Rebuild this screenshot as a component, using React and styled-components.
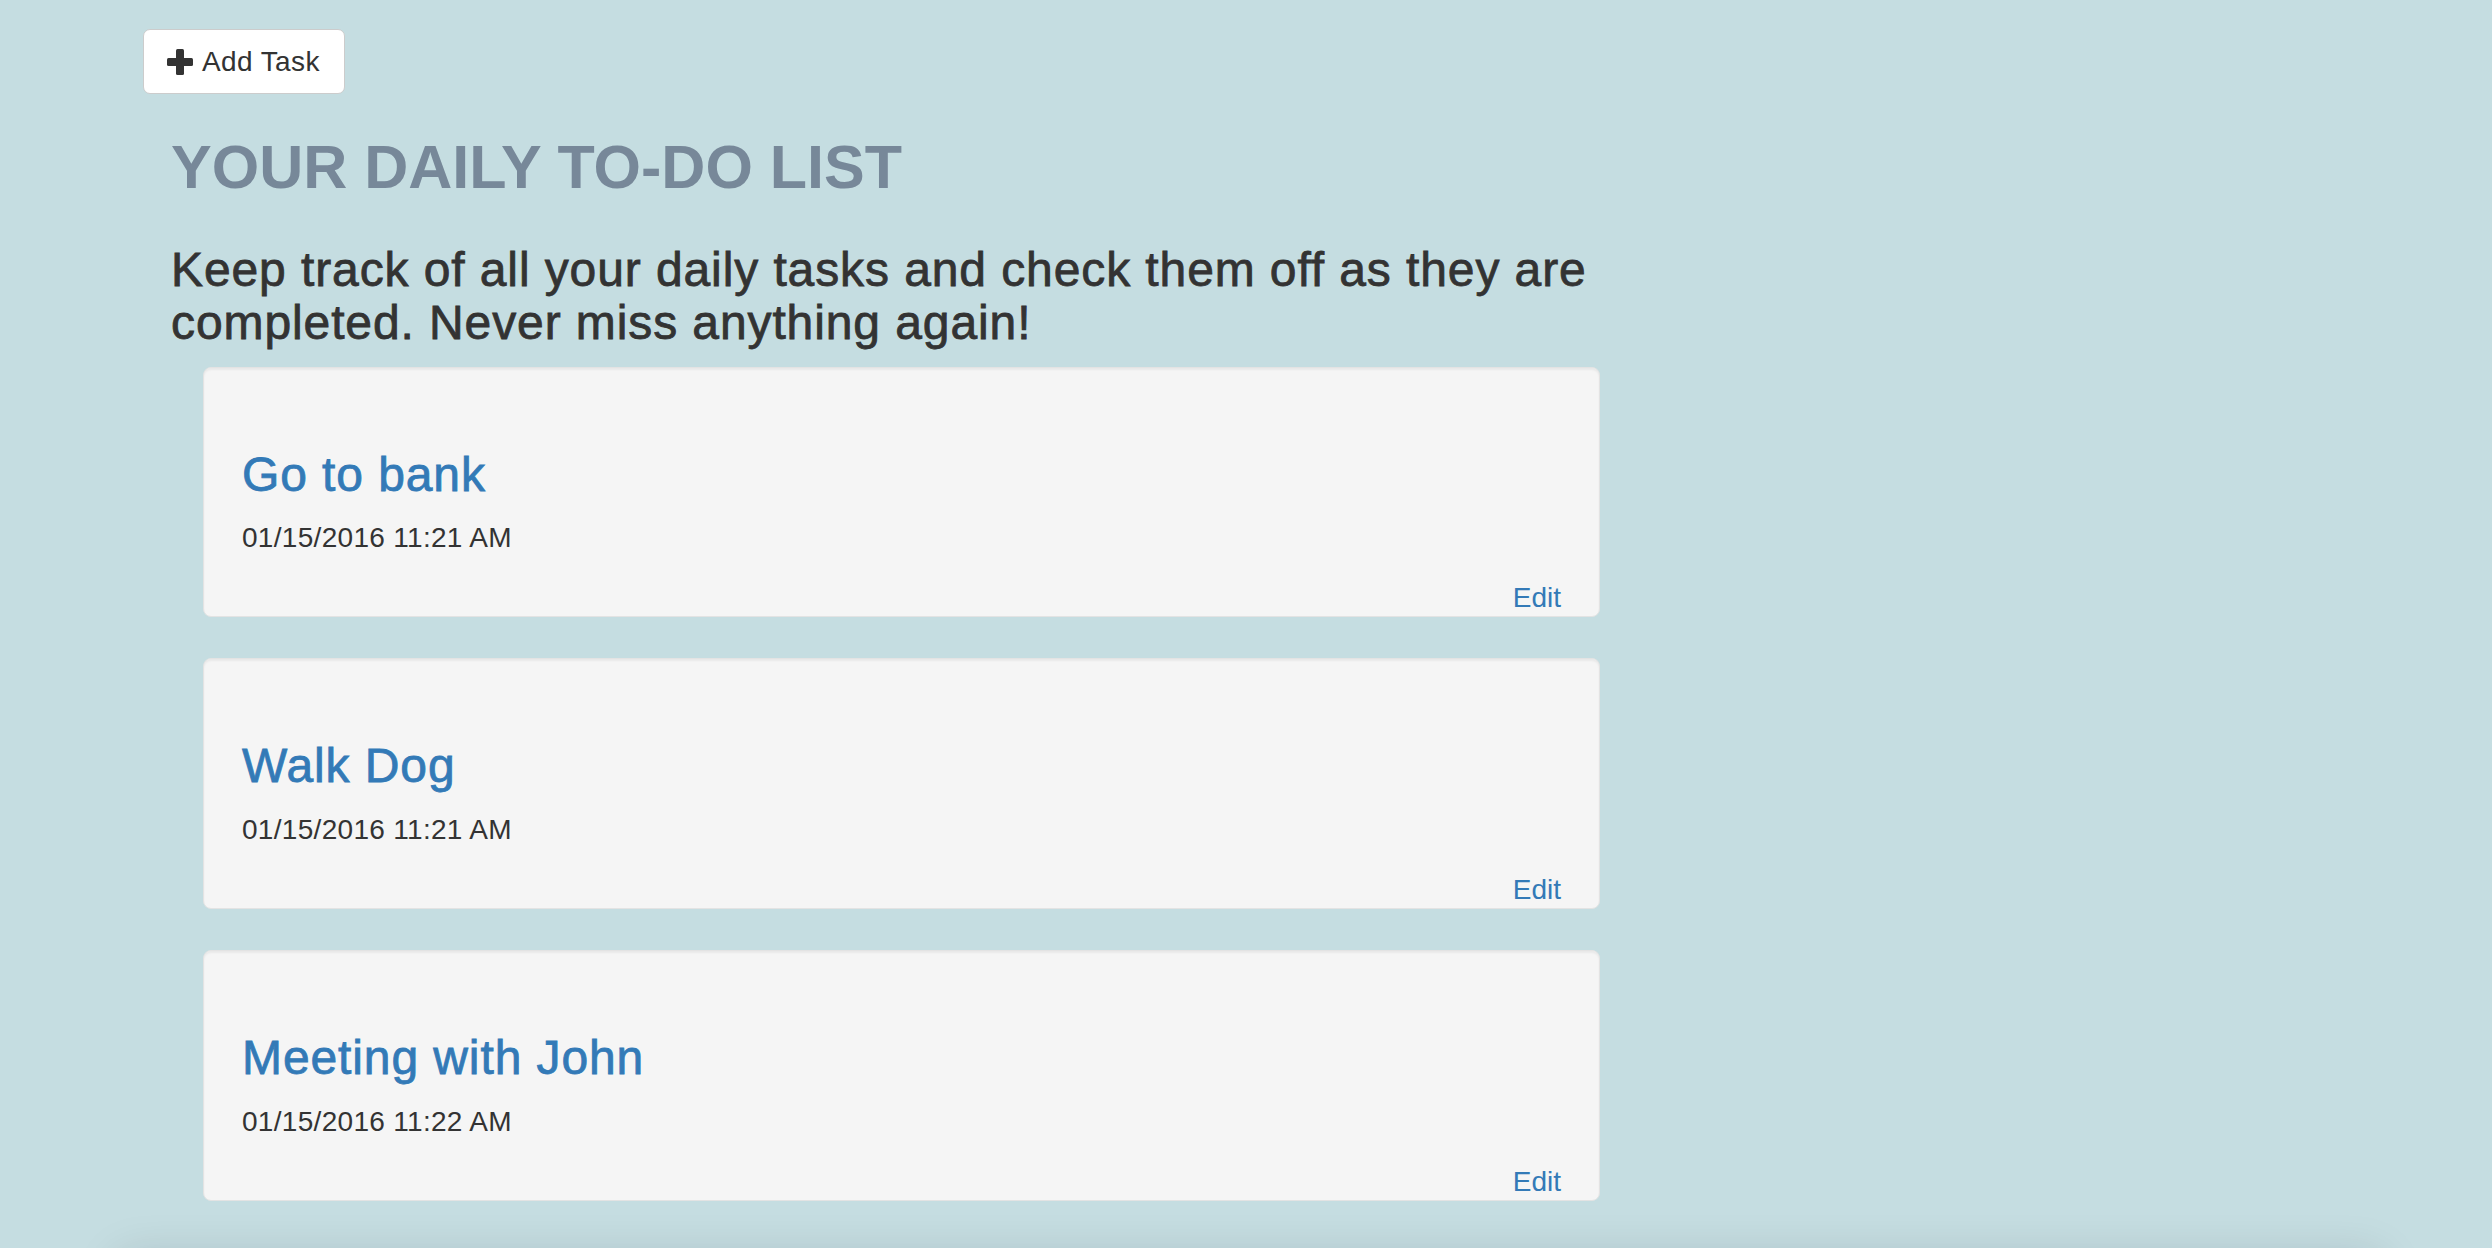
import React from "react";
import styled, { createGlobalStyle } from "styled-components";

const GlobalStyle = createGlobalStyle`
  html, body {
    margin: 0;
    padding: 0;
    background: #c5dde1;
    font-family: "Liberation Sans", Arial, Helvetica, sans-serif;
    color: #333;
    overflow: hidden;
  }
  * { box-sizing: border-box; }
`;

const Page = styled.div`
  padding: 29px 0 0 143px;
`;

const AddButton = styled.button`
  display: inline-flex;
  align-items: center;
  gap: 9px;
  height: 65px;
  padding: 0 24px 0 23px;
  background: #fff;
  border: 1px solid #ccc;
  border-radius: 7px;
  font-family: "Liberation Sans", Arial, sans-serif;
  font-size: 28px;
  line-height: 40px;
  letter-spacing: 0.4px;
  color: #333;
  cursor: pointer;
`;

const Intro = styled.div`
  padding-left: 28px;
  width: 1460px;
`;

const Title = styled.h2`
  margin: 40px 0 0;
  font-size: 61px;
  line-height: 66px;
  font-weight: 700;
  color: #778899;
`;

const Lead = styled.h3`
  margin: 44px 0 17px;
  font-size: 48px;
  line-height: 52.8px;
  font-weight: 400;
  letter-spacing: 0.9px;
  -webkit-text-stroke: 0.8px #333;
  color: #333;
`;

const TaskList = styled.div`
  margin-left: 60px;
  width: 1397px;
  display: flex;
  flex-direction: column;
  gap: 41px;
`;

const Card = styled.div`
  background: #f5f5f5;
  border: 1px solid #e3e3e3;
  border-radius: 8px;
  box-shadow: inset 0 2px 2px rgba(0, 0, 0, 0.05);
  padding: 38px 38px 0 38px;
`;

const TaskName = styled.h3`
  margin: 43px 0 17px;
  font-size: 48px;
  line-height: 52.8px;
  font-weight: 400;
  letter-spacing: 0.9px;
  -webkit-text-stroke: 0.8px #337ab7;
  color: #337ab7;
`;

const TaskDate = styled.p`
  margin: 0 0 22px;
  font-size: 28px;
  line-height: 40px;
  letter-spacing: 0.3px;
  color: #333;
`;

const EditRow = styled.div`
  display: flex;
  justify-content: flex-end;
  font-size: 28px;
  line-height: 36px;
`;

const EditLink = styled.a`
  color: #337ab7;
  text-decoration: none;
  cursor: pointer;
`;

const Footer = styled.div`
  margin: 58px 112px 0 120px;
  height: 200px;
  background: #c5dde1;
  box-shadow: 0 0 44px rgba(0, 20, 30, 0.16);
`;

const PlusIcon = () => (
  <svg width="26" height="26" viewBox="0 0 26 26" aria-hidden="true">
    <rect x="9" y="0" width="8" height="26" rx="1.5" fill="#333" />
    <rect x="0" y="9" width="26" height="8" rx="1.5" fill="#333" />
  </svg>
);

const tasks = [
  { name: "Go to bank", date: "01/15/2016 11:21 AM" },
  { name: "Walk Dog", date: "01/15/2016 11:21 AM" },
  { name: "Meeting with John", date: "01/15/2016 11:22 AM" },
];

export default function App() {
  return (
    <>
      <GlobalStyle />
      <Page>
        <AddButton>
          <PlusIcon />
          Add Task
        </AddButton>
        <Intro>
          <Title>YOUR DAILY TO-DO LIST</Title>
          <Lead>
            Keep track of all your daily tasks and check them off as they are
            completed. Never miss anything again!
          </Lead>
        </Intro>
        <TaskList>
          {tasks.map((t) => (
            <Card key={t.name}>
              <TaskName>{t.name}</TaskName>
              <TaskDate>{t.date}</TaskDate>
              <EditRow>
                <EditLink>Edit</EditLink>
              </EditRow>
            </Card>
          ))}
        </TaskList>
      </Page>
      <Footer />
    </>
  );
}
